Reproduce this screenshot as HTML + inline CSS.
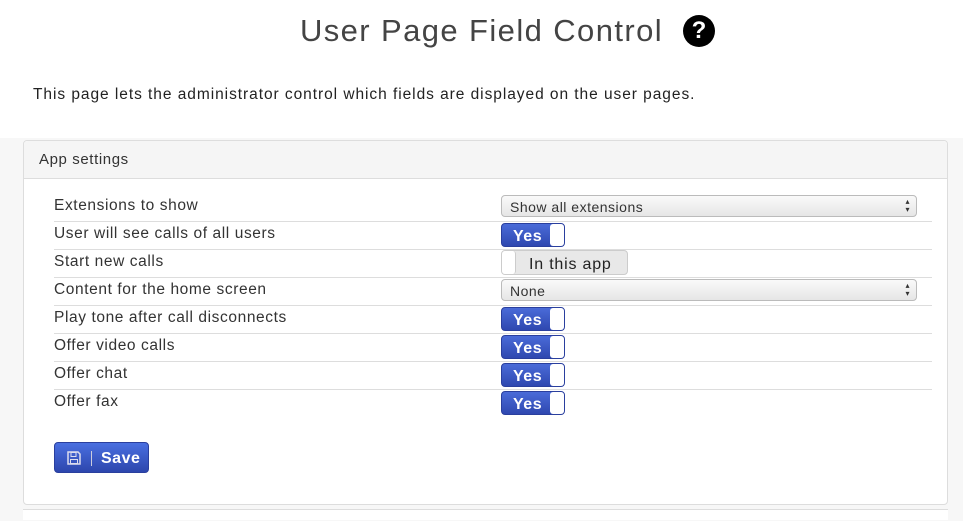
<!DOCTYPE html>
<html><head><style>
body{margin:0;width:963px;height:513px;background:#fff;font-family:"Liberation Sans",sans-serif;color:#333;position:relative;overflow:hidden}
.abs{position:absolute}
h1{position:absolute;top:13px;left:26px;width:963px;text-align:center;margin:0;font-weight:normal;font-size:31px;color:#444;letter-spacing:1.4px}
.q{display:inline-block;width:32px;height:32px;border-radius:50%;background:#000;color:#fff;font-weight:bold;font-size:24px;line-height:32px;text-align:center;vertical-align:3px;margin-left:20px;letter-spacing:0}
.bg{position:absolute;left:0;top:138px;width:963px;height:383px;background:#f7f7f7}
.panel{position:absolute;left:23px;top:140px;width:923px;height:363px;border:1px solid #ddd;border-radius:4px;background:#fff}
.ph{height:37px;background:#f5f5f5;border-bottom:1px solid #ddd;font-size:15px;line-height:37px;padding-left:15px;border-radius:4px 4px 0 0;letter-spacing:0.6px}
.row{position:absolute;left:54px;width:878px;height:28px;border-bottom:1px solid #ddd;font-size:15.5px}
.row>span{position:absolute;top:4px;left:0;letter-spacing:0.6px}
.sel{position:absolute;left:447px;height:22px;border:1px solid #bbb;border-radius:4px;background:linear-gradient(#fafafa,#e6e6e6);font-size:14px;line-height:22px;padding-left:8px;box-sizing:border-box;width:416px;letter-spacing:0.5px}
.sel:after{content:"\25B4\A\25BE";white-space:pre;position:absolute;right:6px;top:2px;font-size:8px;line-height:8px;color:#333}
.tg{position:absolute;left:447px;width:64px;height:24px;border:1px solid #2a3f9e;border-radius:4px;background:linear-gradient(#4a6bd8,#2f48b0);box-sizing:border-box;color:#fff;font-weight:bold;font-size:16px;line-height:25px}
.tg b{position:absolute;left:11px;letter-spacing:0.5px}
.tg i{position:absolute;right:0;top:0;width:14px;height:22px;background:#fff;border-radius:3px}
.off{position:absolute;left:447px;width:127px;height:25px;border:1px solid #ccc;border-radius:4px;background:#e8e8e8;box-sizing:border-box;font-size:16px;line-height:27px;color:#222}
.off i{position:absolute;left:0;top:0;width:13px;height:23px;background:#fff;border-radius:3px;border-right:1px solid #ccc}
.btn{position:absolute;left:54px;top:442px;width:95px;height:31px;border:1px solid #2a3f9e;border-radius:4px;background:linear-gradient(#4a6fe0,#2d46ad);box-sizing:border-box;color:#fff;font-weight:bold;font-size:16px;line-height:31px}
</style></head><body>
<h1>User Page Field Control<span class="q">?</span></h1>
<div class="abs" style="left:33px;top:86px;font-size:15.5px;color:#222;letter-spacing:0.95px">This page lets the administrator control which fields are displayed on the user pages.</div>
<div class="bg"></div>
<div class="panel"><div class="ph">App settings</div></div>
<div class="abs" style="left:23px;top:509px;width:925px;height:10px;border-top:1px solid #ddd;background:#fff"></div>
<div class="row" style="top:193px"><span>Extensions to show</span><div class="sel" style="top:2px">Show all extensions</div></div>
<div class="row" style="top:221px"><span>User will see calls of all users</span><div class="tg" style="top:2px"><b>Yes</b><i></i></div></div>
<div class="row" style="top:249px"><span>Start new calls</span><div class="off" style="top:1px"><i></i><span class="abs" style="left:27px;top:0;letter-spacing:0.8px">In this app</span></div></div>
<div class="row" style="top:277px"><span>Content for the home screen</span><div class="sel" style="top:2px">None</div></div>
<div class="row" style="top:305px"><span>Play tone after call disconnects</span><div class="tg" style="top:2px"><b>Yes</b><i></i></div></div>
<div class="row" style="top:333px"><span>Offer video calls</span><div class="tg" style="top:2px"><b>Yes</b><i></i></div></div>
<div class="row" style="top:361px"><span>Offer chat</span><div class="tg" style="top:2px"><b>Yes</b><i></i></div></div>
<div class="row" style="top:389px;border-bottom:none"><span>Offer fax</span><div class="tg" style="top:2px"><b>Yes</b><i></i></div></div>
<div class="btn">
<svg class="abs" style="left:12px;top:8px" width="14" height="14" viewBox="0 0 14 14"><path d="M1 1h10l2 2v10H1z" fill="none" stroke="#dde" stroke-width="1.5"/><rect x="4" y="1.5" width="5" height="4" fill="none" stroke="#dde"/><rect x="3.5" y="8.5" width="7" height="4" fill="none" stroke="#dde"/></svg>
<span class="abs" style="left:36px;top:8px;width:1px;height:15px;background:#ccd"></span>
<span class="abs" style="left:46px;letter-spacing:0.5px">Save</span></div>
</body></html>
